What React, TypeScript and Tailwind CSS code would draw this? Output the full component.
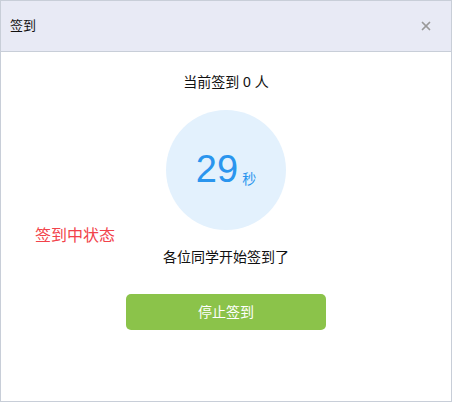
import { X } from "lucide-react";

export default function App() {
  return (
    <div
      className="relative flex h-[402px] w-[452px] flex-col border border-[#c8ced8] bg-white text-[#111]"
      style={{ fontFamily: '"Liberation Sans", "Noto Sans CJK SC", sans-serif' }}
    >
      <div className="flex h-[51px] shrink-0 items-center justify-between border-b border-[#c8ced8] bg-[#e8eaf5] pl-[9px] pr-[18px]">
        <span className="text-[13px]">签到</span>
        <X className="size-[14px] text-[#999]" strokeWidth={3} />
      </div>

      <div className="flex flex-col items-center pt-[20px]">
        <div className="text-[14px] leading-[20px]">当前签到 0 人</div>
        <div className="mt-[18px] flex size-[120px] items-end justify-center rounded-full bg-[#e3f1fd] pb-[42px] text-[#2a95ee]">
          <span className="text-[38px] leading-[38px]">29</span>
          <span className="mb-[2px] ml-[4px] text-[14px] leading-[14px]">秒</span>
        </div>
        <div className="mt-[17px] text-[14px] leading-[20px]">各位同学开始签到了</div>
        <button
          type="button"
          className="mt-[27px] h-[36px] w-[200px] rounded-[5px] bg-[#8bc34a] text-[14px] text-white"
        >
          停止签到
        </button>
      </div>

      <div className="absolute left-[34px] top-[224px] text-[16px] leading-[22px] text-[#f2434b]">
        签到中状态
      </div>
    </div>
  );
}
